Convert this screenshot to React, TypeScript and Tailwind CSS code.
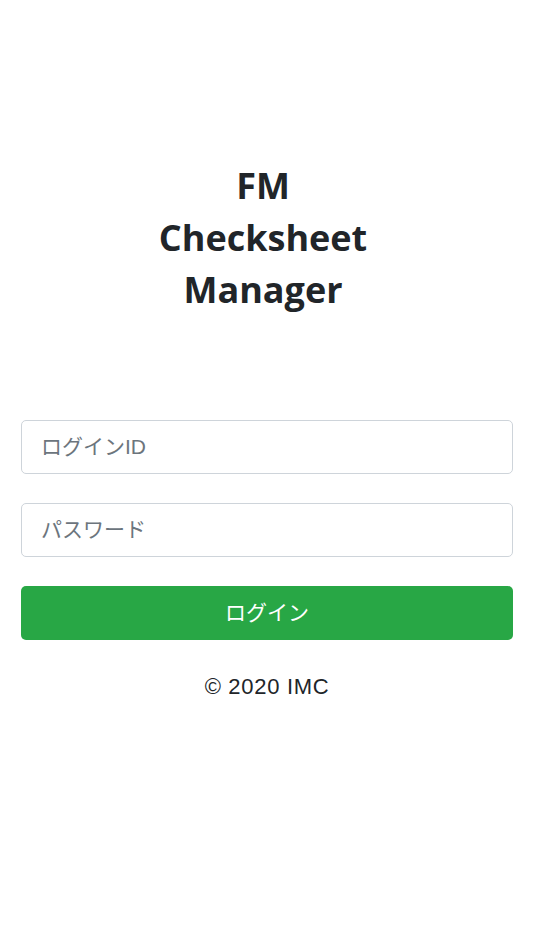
import React from "react";

export default function App() {
  return (
    <div className="min-h-[950px] w-full bg-white px-[21px] pt-[160px]" style={{ fontFamily: '"Liberation Sans", "Noto Sans CJK JP", sans-serif' }}>
      <h1 className="pr-[8px] text-center text-[36px] font-bold leading-[52px] text-[#212529]" style={{ fontFamily: '"Open Sans", sans-serif' }}>
        FM
        <br />
        Checksheet
        <br />
        Manager
      </h1>
      <div className="mt-[104px] flex flex-col gap-[29px]">
        <input
          className="h-[54px] w-full rounded-[5px] border border-[#ced4da] px-[19px] text-[21px] text-[#495057] placeholder:text-[#6c757d] outline-none"
          placeholder="ログインID"
        />
        <input
          type="password"
          className="h-[54px] w-full rounded-[5px] border border-[#ced4da] px-[19px] text-[21px] text-[#495057] placeholder:text-[#6c757d] outline-none"
          placeholder="パスワード"
        />
        <button className="h-[54px] w-full rounded-[5px] bg-[#28a745] text-[21px] text-white">ログイン</button>
      </div>
      <p className="mt-[32px] text-center text-[22px] leading-[30px] tracking-[0.7px] text-[#212529]">© 2020 IMC</p>
    </div>
  );
}
